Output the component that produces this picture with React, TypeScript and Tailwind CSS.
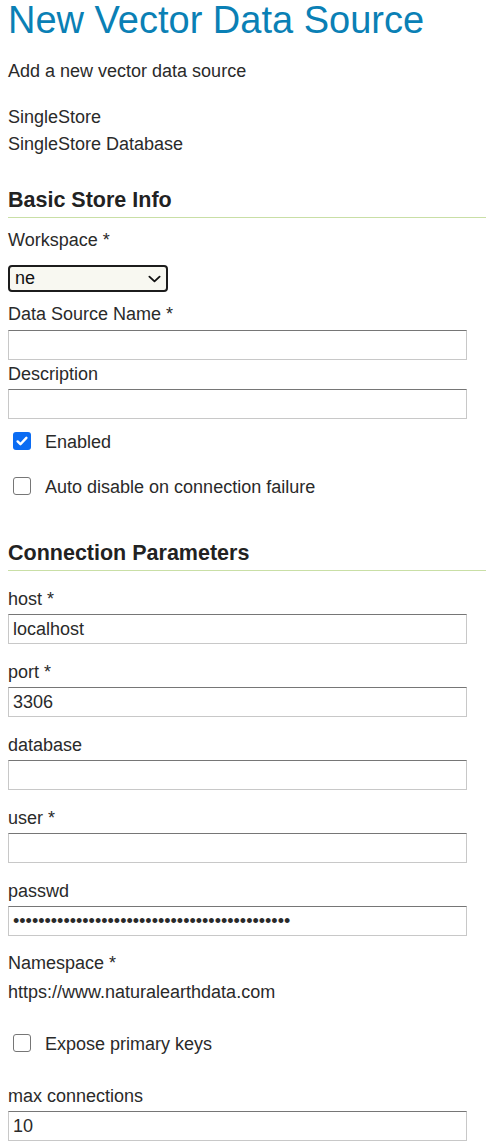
const fieldLabel = "block h-[27px] pt-[1px]";
const inputBox =
  "block h-[30px] w-[459px] border border-[#c8c8c8] border-t-[#767676] bg-white px-[4px] text-[18px] leading-[28px] text-[#2a2a2a] outline-none";

function Field({
  label,
  value = "",
  type = "text",
}: {
  label: string;
  value?: string;
  type?: string;
}) {
  return (
    <div className="mt-[14px]">
      <label className={fieldLabel}>{label}</label>
      <input
        type={type}
        defaultValue={value}
        readOnly
        className={`${inputBox} mt-[2px]`}
      />
    </div>
  );
}

function Check({
  label,
  checked = false,
  className = "",
}: {
  label: string;
  checked?: boolean;
  className?: string;
}) {
  return (
    <div className={`flex h-[27px] items-start ${className}`}>
      {checked ? (
        <span className="ml-[5px] mt-[3px] flex h-[18px] w-[18px] items-center justify-center rounded-[3px] bg-[#0b6cf3]">
          <svg viewBox="0 0 16 16" className="h-[14px] w-[14px]" aria-hidden="true">
            <path
              d="M3 8.5l3.2 3.2L13 4.4"
              fill="none"
              stroke="#fff"
              strokeWidth="2.8"
              strokeLinecap="round"
              strokeLinejoin="round"
            />
          </svg>
        </span>
      ) : (
        <span className="ml-[5px] mt-[3px] block h-[18px] w-[18px] rounded-[3px] border-[1.5px] border-[#767676] bg-white" />
      )}
      <span className="ml-[14px]">{label}</span>
    </div>
  );
}

export default function App() {
  return (
    <div
      className="min-h-[1144px] bg-white pl-[8px] text-[18px] leading-[27px] text-[#2a2a2a]"
      style={{ fontFamily: '"Liberation Sans", Arial, sans-serif' }}
    >
      <h1 className="h-[40px] text-[38px] leading-[40px] font-normal text-[#0a80b5]">
        New Vector Data Source
      </h1>

      <p className="mt-[17px] h-[27px] pt-[1px]">Add a new vector data source</p>

      <div className="mt-[19px]">
        <p className="h-[27px] pt-[1px]">SingleStore</p>
        <p className="h-[27px] pt-[1px]">SingleStore Database</p>
      </div>

      <h2 className="mt-[31px] border-b border-[#c9dfa6] pb-[5px] text-[21.5px] leading-[24px] font-bold text-[#222]">
        Basic Store Info
      </h2>

      <label className={`${fieldLabel} mt-[8px]`}>Workspace *</label>
      <div className="mt-[12px] flex h-[27px] w-[160px] items-center justify-between rounded-[4px] border-2 border-[#1c1c1c] bg-[#f8f8f1] pl-[5px] pr-[5px]">
        <span className="leading-[23px] text-[#111]">ne</span>
        <svg viewBox="0 0 14 8" className="h-[8px] w-[13px]" aria-hidden="true">
          <path
            d="M1.5 1.5L7 6.5l5.5-5"
            fill="none"
            stroke="#111"
            strokeWidth="2"
            strokeLinecap="round"
            strokeLinejoin="round"
          />
        </svg>
      </div>

      <label className={`${fieldLabel} mt-[8px]`}>Data Source Name *</label>
      <input readOnly defaultValue="" className={`${inputBox} mt-[3px]`} />

      <label className={fieldLabel}>Description</label>
      <input readOnly defaultValue="" className={`${inputBox} mt-[2px]`} />

      <Check label="Enabled" checked className="mt-[10px]" />
      <Check label="Auto disable on connection failure" className="mt-[18px]" />

      <h2 className="mt-[40px] border-b border-[#c9dfa6] pb-[5px] text-[21.5px] leading-[24px] font-bold text-[#222]">
        Connection Parameters
      </h2>

      <Field label="host *" value="localhost" />
      <Field label="port *" value="3306" />
      <Field label="database" />
      <Field label="user *" />
      <Field
        label="passwd"
        type="password"
        value="geoserverpasswordgeoserverpasswordgeoservers"
      />

      <label className={`${fieldLabel} mt-[13px]`}>Namespace *</label>
      <p className="mt-[2px] h-[27px] pt-[1px]">https://www.naturalearthdata.com</p>

      <Check label="Expose primary keys" className="mt-[26px]" />

      <label className={`${fieldLabel} mt-[24px]`}>max connections</label>
      <input readOnly defaultValue="10" className={`${inputBox} mt-[2px]`} />
    </div>
  );
}
